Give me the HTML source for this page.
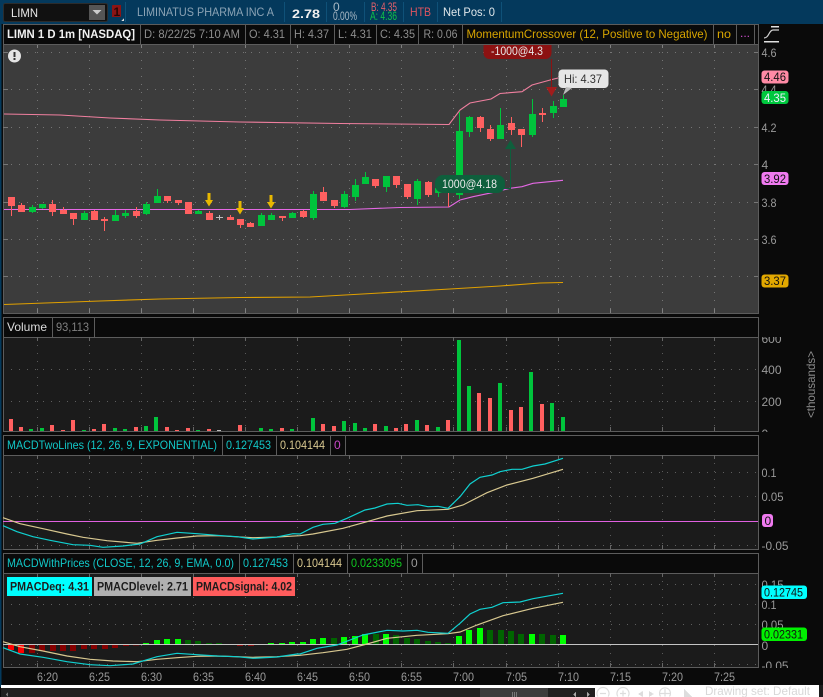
<!DOCTYPE html>
<html><head><meta charset="utf-8"><style>
html,body{margin:0;padding:0;background:#0a0a0a;width:823px;height:697px;overflow:hidden}
svg{display:block}
text{font-family:"Liberation Sans",sans-serif;font-size:12px;white-space:pre}
.ax{fill:#9a9a9a}
.l{fill:#111}
</style></head><body>
<svg width="823" height="697" viewBox="0 0 823 697" xmlns="http://www.w3.org/2000/svg" shape-rendering="crispEdges">
<defs>
<clipPath id="c1"><rect x="3" y="44" width="755" height="269"/></clipPath>
<clipPath id="cv"><rect x="759" y="337" width="40" height="95"/></clipPath>
<clipPath id="cm"><rect x="759" y="455" width="50" height="95"/></clipPath>
<clipPath id="cp"><rect x="759" y="573" width="50" height="95"/></clipPath>
<path id="vg" d="M37.500 0V269M89.500 0V269M141.500 0V269M193.500 0V269M245.500 0V269M297.500 0V269M349.500 0V269M401.500 0V269M453.500 0V269M506.500 0V269M558.500 0V269M610.500 0V269M662.500 0V269M714.500 0V269"/>
<path id="vg2" d="M37.500 0V94M89.500 0V94M141.500 0V94M193.500 0V94M245.500 0V94M297.500 0V94M349.500 0V94M401.500 0V94M453.500 0V94M506.500 0V94M558.500 0V94M610.500 0V94M662.500 0V94M714.500 0V94"/>
<path id="tk" d="M37.500 0V4M89.500 0V4M141.500 0V4M193.500 0V4M245.500 0V4M297.500 0V4M349.500 0V4M401.500 0V4M453.500 0V4M506.500 0V4M558.500 0V4M610.500 0V4M662.500 0V4M714.500 0V4"/>
</defs>
<rect width="823" height="697" fill="#0a0a0a"/>
<!-- top bar -->
<rect width="823" height="24" fill="#04395c"/>
<rect x="0" y="24" width="1.500" height="663" fill="#04395c"/>
<rect x="3.500" y="3.500" width="104" height="18" rx="2" fill="#111" stroke="#2c2c2c"/>
<text x="11" y="17" fill="#e8e8e8" font-size="12" textLength="27" lengthAdjust="spacingAndGlyphs">LIMN</text>
<rect x="89" y="5" width="16" height="15" fill="#555"/>
<path d="M92.500 10h9l-4.500 4.500z" fill="#ccc" shape-rendering="auto"/>
<rect x="112" y="5" width="9" height="12" rx="1" fill="#8c1414"/>
<text x="113.500" y="16" fill="#2a0505" font-size="12" font-weight="bold">1</text>
<path d="M124 18v3h-3z" fill="#ddd"/>
<path d="M125.500 2V22M284.500 2V22M326.500 2V22M364.500 2V22M403.500 2V22M437.500 2V22M501.500 2V22" stroke="#0f5178"/>
<text x="137" y="16" fill="#8ba3b5" font-size="12" textLength="137" lengthAdjust="spacingAndGlyphs">LIMINATUS PHARMA INC A</text>
<text x="292" y="18" fill="#f0f0f0" font-size="14" font-weight="bold" textLength="28" lengthAdjust="spacingAndGlyphs">2.78</text>
<text x="333" y="11" fill="#a8b8c4" font-size="9">0</text>
<text x="333" y="20" fill="#a8b8c4" font-size="9.500" textLength="24" lengthAdjust="spacingAndGlyphs">0.00%</text>
<text x="371" y="11" fill="#e85f6a" font-size="9.500" textLength="26" lengthAdjust="spacingAndGlyphs">B: 4.35</text>
<text x="370" y="20" fill="#10c048" font-size="9.500" textLength="27" lengthAdjust="spacingAndGlyphs">A: 4.36</text>
<text x="410" y="16" fill="#e05560" font-size="12" textLength="21" lengthAdjust="spacingAndGlyphs">HTB</text>
<text x="443" y="16" fill="#dfe6ea" font-size="12" textLength="52" lengthAdjust="spacingAndGlyphs">Net Pos: 0</text>

<!-- main plot -->
<rect x="3.500" y="44.500" width="755" height="269" fill="#3c3c3c" stroke="#5c5c5c"/>
<g clip-path="url(#c1)">
<use href="#vg" y="44" stroke="#757575" stroke-dasharray="1 7"/>
<path d="M3 52.500H758M3 89.500H758M3 127.500H758M3 164.500H758M3 202.500H758M3 239.500H758M3 276.500H758" stroke="#757575" stroke-dasharray="1 7"/>
<use href="#tk" y="44" stroke="#808080"/>
<use href="#tk" y="309" stroke="#808080"/>
<path d="M4 52.500h4M4 89.500h4M4 127.500h4M4 164.500h4M4 202.500h4M4 239.500h4M4 276.500h4" stroke="#777"/>
<path d="M754 52.500h4M754 89.500h4M754 127.500h4M754 164.500h4M754 202.500h4M754 239.500h4M754 276.500h4" stroke="#777"/>
</g>
<g fill="none" stroke-width="1.100" shape-rendering="auto">
<path stroke="#e0a000" d="M4 304.500L100 301L160 299L240 297.500L310 297L380 293L450 289L500 286L540 283L563 282.500"/>
<path stroke="#f07f9f" d="M4 114L60 115L110 118L160 120L240 122L340 123.500L449 124.500L460 110L470 103L491 99L500 93.500L522 91.700L532 85L552 79.500L558 78"/>
<path stroke="#e468e4" d="M4 209.500L350 209.500L400 207.500L449 207L460 200L473 196.700L492 192.700L510 188.300L522 186.700L533 183.300L563 180.300"/>
</g>
<!-- red candles -->
<path stroke="#ff6060" d="M11.500 197V216M21.500 203V212M52.500 200V216M63.500 207V214M73.500 213V225M94.500 210V220M104.500 217V231M136.500 207V218M167.500 196V203M178.500 200V205M188.500 202V214M209.500 211V220M230.500 215V220M240.500 219V228M250.500 222V227M282.500 216V221M303.500 210V218M323.500 187V201M334.500 200V208M375.500 179V188M396.500 176V188M407.500 184V199M428.500 181V197M448.500 193V207M480.500 116V132M490.500 125V141M511.500 117V135M521.500 129V147M542.500 108V122"/>
<g fill="#ff6060">
<rect x="8" y="197" width="7" height="9"/><rect x="18" y="205" width="7" height="7"/><rect x="49" y="204" width="7" height="8"/><rect x="60" y="210" width="7" height="4"/><rect x="70" y="213" width="7" height="6"/><rect x="91" y="211" width="7" height="9"/><rect x="101" y="219" width="7" height="2"/><rect x="133" y="211" width="7" height="5"/><rect x="164" y="196" width="7" height="5"/><rect x="175" y="200" width="7" height="3"/><rect x="185" y="202" width="7" height="12"/><rect x="206" y="213" width="7" height="7"/><rect x="227" y="217" width="7" height="3"/><rect x="237" y="219" width="7" height="6"/><rect x="247" y="223" width="7" height="4"/><rect x="279" y="216" width="7" height="2"/><rect x="300" y="211" width="7" height="6"/><rect x="320" y="192" width="7" height="9"/><rect x="331" y="200" width="7" height="6"/><rect x="372" y="179" width="7" height="7"/><rect x="393" y="176" width="7" height="9"/><rect x="404" y="184" width="7" height="13"/><rect x="425" y="182" width="7" height="13"/><rect x="477" y="117" width="7" height="11"/><rect x="487" y="129" width="7" height="10"/><rect x="508" y="123" width="7" height="7"/><rect x="518" y="129" width="7" height="6"/><rect x="539" y="113" width="7" height="2"/>
</g>
<!-- green candles -->
<path stroke="#00c43c" d="M32.500 205V213M42.500 204V209M84.500 211V220M115.500 210V221M125.500 210V218M146.500 202V215M157.500 189V203M198.500 210V214M261.500 213V226M271.500 213V220M292.500 212V218M313.500 191V220M344.500 191V208M355.500 179V201M365.500 172V184M386.500 176V192M417.500 179V205M438.500 186V197M459.500 112V199M469.500 116V137M500.500 108V139M532.500 99V137M553.500 101V118M563.500 95V107"/>
<g fill="#00c43c">
<rect x="29" y="207" width="7" height="5"/><rect x="39" y="204" width="7" height="4"/><rect x="81" y="213" width="7" height="7"/><rect x="112" y="215" width="7" height="6"/><rect x="122" y="213" width="7" height="3"/><rect x="143" y="204" width="7" height="10"/><rect x="154" y="196" width="7" height="7"/><rect x="195" y="211" width="7" height="3"/><rect x="258" y="215" width="7" height="11"/><rect x="268" y="215" width="7" height="5"/><rect x="289" y="213" width="7" height="5"/><rect x="310" y="194" width="7" height="24"/><rect x="341" y="194" width="7" height="13"/><rect x="352" y="185" width="7" height="12"/><rect x="362" y="177" width="7" height="7"/><rect x="383" y="176" width="7" height="11"/><rect x="414" y="181" width="7" height="18"/><rect x="435" y="188" width="7" height="5"/><rect x="456" y="131" width="7" height="64"/><rect x="466" y="117" width="7" height="15"/><rect x="497" y="125" width="7" height="14"/><rect x="529" y="114" width="7" height="21"/><rect x="550" y="106" width="7" height="7"/><rect x="560" y="99" width="7" height="8"/>
</g>
<path stroke="#bdbdbd" d="M216 217.500h7M219.500 215v5"/>
<!-- yellow arrows -->
<g fill="#e8b800" shape-rendering="auto">
<path d="M207.500 193h3v7h2.500l-4 6.500-4-6.500h2.500z"/>
<path d="M238.500 201h3v7h2.500l-4 6.500-4-6.500h2.500z"/>
<path d="M269.500 195h3v7h2.500l-4 6.500-4-6.500h2.500z"/>
</g>
<!-- orders -->
<path d="M483.500 44H551.500V53a6 6 0 0 1-6 6H489.500a6 6 0 0 1-6-6z" fill="#8c1212" shape-rendering="auto"/>
<text x="491" y="55" fill="#e8e8e8" font-size="12" textLength="52" lengthAdjust="spacingAndGlyphs">-1000@4.3</text>
<path d="M551.500 59V88" stroke="#8c1212"/>
<path d="M546 87h11l-5.500 9.500z" fill="#a01c1c" shape-rendering="auto"/>
<path d="M510.500 149V189" stroke="#0e5f3c"/>
<path d="M505 149l5.500-9 5.500 9z" fill="#0e5f3c" shape-rendering="auto"/>
<rect x="435" y="175" width="70" height="18" rx="8" fill="#0e5f3c" shape-rendering="auto"/>
<path d="M500 188.500H510.500" stroke="#0e5f3c"/>
<text x="442" y="188" fill="#e8e8e8" font-size="12" textLength="55" lengthAdjust="spacingAndGlyphs">1000@4.18</text>
<rect x="558.500" y="69.500" width="50" height="18.500" rx="4" fill="#e6e6e6" shape-rendering="auto"/>
<path d="M566 87l-3 8 9-7z" fill="#bbb" shape-rendering="auto"/>
<text x="564" y="83" fill="#333" font-size="12" textLength="38" lengthAdjust="spacingAndGlyphs">Hi: 4.37</text>

<!-- header 1 -->
<rect x="3.500" y="24.500" width="755" height="20" fill="#0a0a0a" stroke="#5c5c5c"/>
<path d="M140.500 25V44M245.500 25V44M290.500 25V44M334.500 25V44M376.500 25V44M418.500 25V44M462.500 25V44M713.500 25V44M736.500 25V44M754.500 25V44" stroke="#5c5c5c"/>
<text x="7" y="38" fill="#f2f2f2" font-size="12" font-weight="bold" textLength="128" lengthAdjust="spacingAndGlyphs">LIMN 1 D 1m [NASDAQ]</text>
<g fill="#8e8e8e">
<text x="144" y="38" textLength="96" lengthAdjust="spacingAndGlyphs">D: 8/22/25 7:10 AM</text>
<text x="249" y="38" textLength="36" lengthAdjust="spacingAndGlyphs">O: 4.31</text>
<text x="294" y="38" textLength="35" lengthAdjust="spacingAndGlyphs">H: 4.37</text>
<text x="338" y="38" textLength="34" lengthAdjust="spacingAndGlyphs">L: 4.31</text>
<text x="380" y="38" textLength="35" lengthAdjust="spacingAndGlyphs">C: 4.35</text>
<text x="423.500" y="38" textLength="34" lengthAdjust="spacingAndGlyphs">R: 0.06</text>
</g>
<text x="466.500" y="38" fill="#d8a500" textLength="241" lengthAdjust="spacingAndGlyphs">MomentumCrossover (12, Positive to Negative)</text>
<text x="717" y="38" fill="#d8a500" textLength="14" lengthAdjust="spacingAndGlyphs">no</text>
<text x="740" y="37" fill="#d050d0" font-size="11">...</text>
<circle cx="14.500" cy="56" r="6.500" fill="#e4e4e4" shape-rendering="auto"/>
<path d="M14.500 52V57" stroke="#333" stroke-width="2"/><path d="M14.500 58v2" stroke="#333" stroke-width="2"/>
<!-- icon -->
<path d="M771 26.500h8M764 41.500h15" stroke="#e0e0e0" stroke-width="1.500"/>
<path d="M764 38c5 0 5-8 9-8s4 0 6 0" fill="none" stroke="#d0d0d0" stroke-width="1.200" shape-rendering="auto"/>

<!-- main scale -->
<g class="ax">
<text x="761.500" y="57" textLength="15" lengthAdjust="spacingAndGlyphs">4.6</text>
<text x="761.500" y="94" textLength="15" lengthAdjust="spacingAndGlyphs">4.4</text>
<text x="761.500" y="132" textLength="15" lengthAdjust="spacingAndGlyphs">4.2</text>
<text x="761.500" y="169" font-size="12">4</text>
<text x="761.500" y="207" textLength="15" lengthAdjust="spacingAndGlyphs">3.8</text>
<text x="761.500" y="244" textLength="15" lengthAdjust="spacingAndGlyphs">3.6</text>
</g>
<g shape-rendering="auto">
<rect x="761.500" y="70.500" width="27" height="13" rx="3" fill="#ff8aa5"/>
<text x="764" y="81" class="l" textLength="22" lengthAdjust="spacingAndGlyphs">4.46</text>
<rect x="761.500" y="91" width="27" height="13" rx="3" fill="#00c83e"/>
<text x="764" y="102" fill="#eef" textLength="22" lengthAdjust="spacingAndGlyphs">4.35</text>
<rect x="761.500" y="172" width="27" height="13" rx="3" fill="#f07af0"/>
<text x="764" y="183" class="l" textLength="22" lengthAdjust="spacingAndGlyphs">3.92</text>
<rect x="761.500" y="274.500" width="27" height="13" rx="3" fill="#e2a800"/>
<text x="764" y="285" class="l" textLength="22" lengthAdjust="spacingAndGlyphs">3.37</text>
</g>

<!-- volume -->
<rect x="3.500" y="317.500" width="755" height="20" fill="#0a0a0a" stroke="#5c5c5c"/>
<path d="M52.500 318V337M94.500 318V337" stroke="#5c5c5c"/>
<text x="7" y="331" fill="#dcdcdc" textLength="40" lengthAdjust="spacingAndGlyphs">Volume</text>
<text x="56" y="331" fill="#808080" textLength="33" lengthAdjust="spacingAndGlyphs">93,113</text>
<rect x="3.500" y="337.500" width="755" height="94" fill="#1b1b1b" stroke="#5c5c5c"/>
<use href="#vg2" y="337" stroke="#5a5a5a" stroke-dasharray="1 7"/>
<path d="M3 369.500H758M3 401.500H758" stroke="#5e5e5e" stroke-dasharray="1 7"/>
<use href="#tk" y="337" stroke="#666"/><use href="#tk" y="427" stroke="#666"/>
<g fill="#ff6060">
<rect x="9" y="419" width="4" height="12"/><rect x="19" y="427" width="4" height="4"/><rect x="50" y="425" width="4" height="6"/><rect x="61" y="430" width="4" height="1"/><rect x="71" y="420" width="4" height="11"/><rect x="92" y="429" width="4" height="2"/><rect x="102" y="424" width="4" height="7"/><rect x="134" y="427" width="4" height="4"/><rect x="165" y="427" width="4" height="4"/><rect x="175" y="430" width="4" height="1"/><rect x="186" y="428" width="4" height="3"/><rect x="207" y="429" width="4" height="2"/><rect x="238" y="425" width="4" height="6"/><rect x="280" y="428" width="4" height="3"/><rect x="321" y="424" width="4" height="7"/><rect x="332" y="426" width="4" height="5"/><rect x="373" y="424" width="4" height="7"/><rect x="394" y="428" width="4" height="3"/><rect x="404" y="424" width="4" height="7"/><rect x="425" y="425" width="4" height="6"/><rect x="446" y="420" width="4" height="11"/><rect x="477" y="393" width="4" height="38"/><rect x="488" y="398" width="4" height="33"/><rect x="509" y="410" width="4" height="21"/><rect x="519" y="407" width="4" height="24"/><rect x="540" y="404" width="4" height="27"/>
</g>
<g fill="#00c43c">
<rect x="29" y="429" width="4" height="2"/><rect x="40" y="428" width="4" height="3"/><rect x="82" y="430" width="4" height="1"/><rect x="113" y="428" width="4" height="3"/><rect x="123" y="429" width="4" height="2"/><rect x="144" y="426" width="4" height="5"/><rect x="154" y="417" width="4" height="14"/><rect x="196" y="430" width="4" height="1"/><rect x="259" y="428" width="4" height="3"/><rect x="269" y="429" width="4" height="2"/><rect x="290" y="429" width="4" height="2"/><rect x="311" y="418" width="4" height="13"/><rect x="342" y="421" width="4" height="10"/><rect x="353" y="423" width="4" height="8"/><rect x="363" y="428" width="4" height="3"/><rect x="384" y="426" width="4" height="5"/><rect x="415" y="420" width="4" height="11"/><rect x="436" y="427" width="4" height="4"/><rect x="457" y="340" width="4" height="91"/><rect x="467" y="386" width="4" height="45"/><rect x="498" y="383" width="4" height="48"/><rect x="529" y="372" width="4" height="59"/><rect x="550" y="403" width="4" height="28"/><rect x="561" y="417" width="4" height="14"/>
</g>
<rect x="217" y="430" width="4" height="1" fill="#bbb"/>
<g class="ax" clip-path="url(#cv)">
<text x="761.500" y="343" textLength="20" lengthAdjust="spacingAndGlyphs">600</text>
<text x="761.500" y="374" textLength="20" lengthAdjust="spacingAndGlyphs">400</text>
<text x="761.500" y="406" textLength="20" lengthAdjust="spacingAndGlyphs">200</text>
<text x="761.500" y="438">0</text>
</g>
<text transform="translate(815 418) rotate(-90)" x="0" y="0" fill="#8a8a8a" textLength="67" lengthAdjust="spacingAndGlyphs">&lt;thousands&gt;</text>

<!-- MACD two -->
<rect x="3.500" y="435.500" width="755" height="20" fill="#0a0a0a" stroke="#5c5c5c"/>
<path d="M222.500 436V455M276.500 436V455M330.500 436V455M345.500 436V455" stroke="#5c5c5c"/>
<text x="7" y="449" fill="#12c8c8" textLength="210" lengthAdjust="spacingAndGlyphs">MACDTwoLines (12, 26, 9, EXPONENTIAL)</text>
<text x="226" y="449" fill="#12c8c8" textLength="45" lengthAdjust="spacingAndGlyphs">0.127453</text>
<text x="280" y="449" fill="#d8c890" textLength="45" lengthAdjust="spacingAndGlyphs">0.104144</text>
<text x="334" y="449" fill="#c848c8">0</text>
<rect x="3.500" y="455.500" width="755" height="94" fill="#1b1b1b" stroke="#5c5c5c"/>
<use href="#vg2" y="455" stroke="#5a5a5a" stroke-dasharray="1 7"/>
<path d="M3 472.500H758M3 496.500H758M3 545.500H758" stroke="#5e5e5e" stroke-dasharray="1 7"/>
<use href="#tk" y="455" stroke="#666"/><use href="#tk" y="545" stroke="#666"/>
<path d="M3 521.500H758" stroke="#e060e0"/>
<g fill="none" stroke-width="1.200" shape-rendering="auto">
<path stroke="#d8c890" d="M3 517.700L20 523.700L43 528.700L67 534L83 537.300L107 540.700L137 543.300L157 540.300L177 538L197 536L217 535.700L253 537.700L277 537L300 535.700L313 534L343 528.300L367 521.700L387 516L417 510.700L448 509.300L463 505L487 492.700L507 485L533 478.300L563 469.300"/>
<path stroke="#10d0d0" d="M3 525.700L17 531.700L33 536.700L50 540.300L73 544.700L90 545.300L103 547.300L123 546L140 544L157 536.700L177 532.300L197 533.700L217 535.300L237 536.700L253 539L277 537L293 533.700L300 534L313 527.300L323 524.300L335 523.300L347 518.300L365 510L375 508L387 504L398 503.300L407 505.300L418 504.700L428 506.700L438 506.300L448 508.300L460 496.700L470 484L480 477.300L492 475L500 471.700L512 469.300L522 469.300L533 466L545 464L563 458.300"/>
</g>
<g class="ax" clip-path="url(#cm)">
<text x="761.500" y="477" textLength="15" lengthAdjust="spacingAndGlyphs">0.1</text>
<text x="761.500" y="501" textLength="22" lengthAdjust="spacingAndGlyphs">0.05</text>
<text x="761.500" y="550" textLength="27" lengthAdjust="spacingAndGlyphs">-0.05</text>
</g>
<rect x="762" y="514" width="11" height="13" rx="3" fill="#f07af0" shape-rendering="auto"/>
<text x="764.500" y="525" class="l">0</text>

<!-- MACD with prices -->
<rect x="3.500" y="553.500" width="755" height="20" fill="#0a0a0a" stroke="#5c5c5c"/>
<path d="M239.500 554V573M293.500 554V573M347.500 554V573M407.500 554V573M422.500 554V573" stroke="#5c5c5c"/>
<text x="7" y="567" fill="#12c8c8" textLength="227" lengthAdjust="spacingAndGlyphs">MACDWithPrices (CLOSE, 12, 26, 9, EMA, 0.0)</text>
<text x="243" y="567" fill="#12c8c8" textLength="45" lengthAdjust="spacingAndGlyphs">0.127453</text>
<text x="297" y="567" fill="#d8c890" textLength="45" lengthAdjust="spacingAndGlyphs">0.104144</text>
<text x="351" y="567" fill="#10c820" textLength="51" lengthAdjust="spacingAndGlyphs">0.0233095</text>
<text x="411" y="567" fill="#9a9a9a">0</text>
<rect x="3.500" y="573.500" width="755" height="94" fill="#1b1b1b" stroke="#5c5c5c"/>
<use href="#vg2" y="573" stroke="#5a5a5a" stroke-dasharray="1 7"/>
<path d="M3 584.500H758M3 604.500H758M3 624.500H758M3 664.500H758" stroke="#5e5e5e" stroke-dasharray="1 7"/>
<use href="#tk" y="573" stroke="#666"/><use href="#tk" y="663" stroke="#666"/>
<g fill="#ff0000">
<rect x="8" y="644" width="6" height="6"/><rect x="18" y="644" width="6" height="9"/><rect x="237" y="644" width="6" height="1.500"/><rect x="248" y="644" width="6" height="1.500"/>
</g>
<g fill="#860000">
<rect x="29" y="644" width="6" height="9"/><rect x="39" y="644" width="6" height="7"/><rect x="50" y="644" width="6" height="7"/><rect x="60" y="644" width="6" height="7"/><rect x="70" y="644" width="6" height="7"/><rect x="81" y="644" width="6" height="5"/><rect x="91" y="644" width="6" height="5"/><rect x="102" y="644" width="6" height="5"/><rect x="112" y="644" width="6" height="4"/><rect x="123" y="644" width="6" height="2"/><rect x="133" y="644" width="6" height="1.500"/>
</g>
<g fill="#00ff00">
<rect x="143" y="643" width="6" height="1.500"/><rect x="154" y="640" width="6" height="4"/><rect x="164" y="639" width="6" height="5"/><rect x="175" y="639" width="6" height="5"/><rect x="268" y="643" width="6" height="1.500"/><rect x="279" y="643" width="6" height="1.500"/><rect x="289" y="642" width="6" height="2"/><rect x="300" y="642" width="6" height="2"/><rect x="310" y="639" width="6" height="5"/><rect x="320" y="638" width="6" height="6"/><rect x="341" y="637" width="6" height="7"/><rect x="352" y="636" width="6" height="8"/><rect x="362" y="634" width="6" height="10"/><rect x="383" y="634" width="6" height="10"/><rect x="456" y="636" width="6" height="8"/><rect x="466" y="630" width="6" height="14"/><rect x="477" y="628" width="6" height="16"/><rect x="529" y="634" width="6" height="10"/><rect x="560" y="635" width="6" height="9"/>
</g>
<g fill="#006400">
<rect x="185" y="640" width="6" height="4"/><rect x="195" y="641" width="6" height="3"/><rect x="206" y="643" width="6" height="1.500"/><rect x="216" y="643" width="6" height="1.500"/><rect x="331" y="638" width="6" height="6"/><rect x="373" y="634" width="6" height="10"/><rect x="393" y="635" width="6" height="9"/><rect x="404" y="638" width="6" height="6"/><rect x="414" y="639" width="6" height="5"/><rect x="425" y="641" width="6" height="3"/><rect x="435" y="642" width="6" height="2"/><rect x="445" y="643" width="6" height="1"/><rect x="487" y="630" width="6" height="14"/><rect x="498" y="630" width="6" height="14"/><rect x="508" y="631" width="6" height="13"/><rect x="518" y="634" width="6" height="10"/><rect x="539" y="634" width="6" height="10"/><rect x="550" y="635" width="6" height="9"/>
</g>
<path d="M3 644.500H758" stroke="#c4c4c4"/>
<g fill="none" stroke-width="1.200" shape-rendering="auto">
<path stroke="#d8c890" d="M3 641.700L20 646.700L43 651L67 656L90 659.300L113 661L137 661.700L157 659.300L177 657.700L197 656.300L217 656L253 657.300L277 656.700L300 655.300L323 652.700L347 649.300L367 644L387 638.300L417 635.300L448 633.700L460 632L477 625L503 615.700L533 608.300L563 602.300"/>
<path stroke="#10d0d0" d="M3 647.700L20 654L43 657.300L67 661.700L90 664.700L110 665.700L133 664L157 656.700L177 653.300L197 654.700L217 656L237 656.700L253 658.300L277 657L297 654L300 654L317 648.300L337 645L363 635L387 630.300L403 631L417 630.300L428 632.300L448 633.300L460 623.300L470 614L480 609.300L492 607.300L503 602.700L520 602L533 598.700L563 593.300"/>
</g>
<rect x="7" y="577" width="85" height="19" fill="#00ffff"/>
<rect x="94" y="577" width="97" height="19" fill="#b0b0b0"/>
<rect x="193" y="577" width="102" height="19" fill="#ff5c5c"/>
<g font-weight="bold" fill="#1c1c1c">
<text x="10" y="590.500" font-weight="bold" textLength="79" lengthAdjust="spacingAndGlyphs">PMACDeq: 4.31</text>
<text x="97" y="590.500" font-weight="bold" textLength="91" lengthAdjust="spacingAndGlyphs">PMACDlevel: 2.71</text>
<text x="196" y="590.500" font-weight="bold" textLength="96" lengthAdjust="spacingAndGlyphs">PMACDsignal: 4.02</text>
</g>
<g class="ax" clip-path="url(#cp)">
<text x="761.500" y="589" textLength="22" lengthAdjust="spacingAndGlyphs">0.15</text>
<text x="761.500" y="609" textLength="15" lengthAdjust="spacingAndGlyphs">0.1</text>
<text x="761.500" y="629" textLength="22" lengthAdjust="spacingAndGlyphs">0.05</text>
<text x="761.500" y="650">0</text>
<text x="761.500" y="670" textLength="27" lengthAdjust="spacingAndGlyphs">-0.05</text>
</g>
<g shape-rendering="auto">
<rect x="761.500" y="585.500" width="45.500" height="13.500" rx="3" fill="#00ffff"/>
<text x="764" y="596.500" class="l" textLength="39" lengthAdjust="spacingAndGlyphs">0.12745</text>
<rect x="761.500" y="627.500" width="45.500" height="13.500" rx="3" fill="#00f000"/>
<text x="764" y="638.500" class="l" textLength="39" lengthAdjust="spacingAndGlyphs">0.02331</text>
</g>

<!-- time axis -->
<g class="ax">
<text x="37" y="681" textLength="21" lengthAdjust="spacingAndGlyphs">6:20</text>
<text x="89" y="681" textLength="21" lengthAdjust="spacingAndGlyphs">6:25</text>
<text x="141" y="681" textLength="21" lengthAdjust="spacingAndGlyphs">6:30</text>
<text x="193" y="681" textLength="21" lengthAdjust="spacingAndGlyphs">6:35</text>
<text x="245" y="681" textLength="21" lengthAdjust="spacingAndGlyphs">6:40</text>
<text x="297" y="681" textLength="21" lengthAdjust="spacingAndGlyphs">6:45</text>
<text x="349" y="681" textLength="21" lengthAdjust="spacingAndGlyphs">6:50</text>
<text x="401" y="681" textLength="21" lengthAdjust="spacingAndGlyphs">6:55</text>
<text x="453" y="681" textLength="21" lengthAdjust="spacingAndGlyphs">7:00</text>
<text x="506" y="681" textLength="21" lengthAdjust="spacingAndGlyphs">7:05</text>
<text x="558" y="681" textLength="21" lengthAdjust="spacingAndGlyphs">7:10</text>
<text x="610" y="681" textLength="21" lengthAdjust="spacingAndGlyphs">7:15</text>
<text x="662" y="681" textLength="21" lengthAdjust="spacingAndGlyphs">7:20</text>
<text x="714" y="681" textLength="21" lengthAdjust="spacingAndGlyphs">7:25</text>
</g>

<!-- bottom -->
<rect x="1" y="685" width="818" height="3" fill="#fff"/>
<rect x="1" y="688" width="594" height="9" fill="#202020"/>
<rect x="595" y="688" width="224" height="9" fill="#fff"/>
<rect x="819" y="685" width="4" height="12" fill="#1c1c1c"/>
<rect x="480" y="688" width="68" height="9" fill="#3c3c3c"/>
<path d="M512.500 692V697M514.500 692V697M516.500 692V697" stroke="#777"/>
<path d="M8 692v5l-2-2.500z" fill="#777"/>
<path d="M576 692v5l-3-2.500zM587 692v5l3-2.500z" fill="#aaa"/>
<g fill="none" stroke="#ddd" stroke-width="1.200" shape-rendering="auto">
<path d="M597.800 696.500A6 6 0 1 1 608.200 696.500M600 693.500h6"/>
<path d="M617.800 696.500A6 6 0 1 1 628.200 696.500M620 693.500h6M623 690.500v6"/>
<path d="M660.500 696.500A5.500 5.500 0 1 1 669.500 696.500M659 693.500h12M665 689v7.500"/>
</g>
<path d="M638 694l5-3v6zM654 694l-5-3v6z" fill="#ddd"/>
<path d="M684 689l8 8h-8z" fill="#ddd"/>
<text x="705" y="695" fill="#d8d8d8" font-size="9.500" textLength="105" lengthAdjust="spacingAndGlyphs">Drawing set: Default</text>
</svg>
</body></html>
